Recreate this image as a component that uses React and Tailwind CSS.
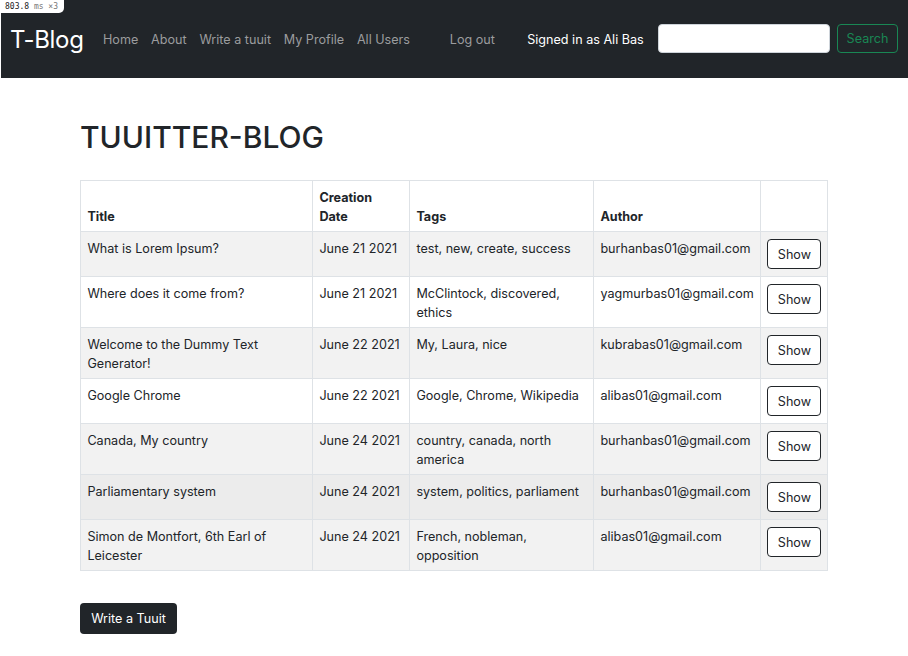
import React from 'react';

const NAV_LINKS = ['Home', 'About', 'Write a tuuit', 'My Profile', 'All Users'];

const TUUITS = [
  { title: 'What is Lorem Ipsum?', date: 'June 21 2021', tags: 'test, new, create, success', author: 'burhanbas01@gmail.com' },
  { title: 'Where does it come from?', date: 'June 21 2021', tags: 'McClintock, discovered, ethics', author: 'yagmurbas01@gmail.com' },
  { title: 'Welcome to the Dummy Text Generator!', date: 'June 22 2021', tags: 'My, Laura, nice', author: 'kubrabas01@gmail.com' },
  { title: 'Google Chrome', date: 'June 22 2021', tags: 'Google, Chrome, Wikipedia', author: 'alibas01@gmail.com' },
  { title: 'Canada, My country', date: 'June 24 2021', tags: 'country, canada, north america', author: 'burhanbas01@gmail.com' },
  { title: 'Parliamentary system', date: 'June 24 2021', tags: 'system, politics, parliament', author: 'burhanbas01@gmail.com' },
  { title: 'Simon de Montfort, 6th Earl of Leicester', date: 'June 24 2021', tags: 'French, nobleman, opposition', author: 'alibas01@gmail.com' },
];

const Navbar = () => (
  <nav className="h-[78px] bg-[#212529] border-l border-white flex items-center pl-[9px] pr-[10px] whitespace-nowrap">
    <span className="shrink-0 text-white text-[24px] leading-none mr-[13px] pt-[2px] tracking-[-0.3px]">T-Blog</span>
    <ul className="flex items-center shrink-0 pt-[2px]">
      {NAV_LINKS.map((link) => (
        <li key={link} className="px-[6.4px] text-[12.6px] text-[#9b9c9e]">
          {link}
        </li>
      ))}
      <li className="ml-[27px] px-[6.4px] text-[12.6px] text-[#9b9c9e]">Log out</li>
    </ul>
    <span className="shrink-0 ml-[26px] pt-[2px] text-[12.6px] text-white">Signed in as Ali Bas</span>
    <div className="ml-auto flex items-center gap-[7px] shrink-0 mb-[1px]">
      <input
        type="search"
        className="w-[172px] h-[29px] rounded-[4px] bg-white border border-[#ced4da] outline-none"
      />
      <button className="h-[29px] w-[61px] rounded-[4px] border border-[#198754] pt-[1px] text-[#198754] text-[12.6px]">
        Search
      </button>
    </div>
  </nav>
);

const TuuitTable = () => (
  <table className="w-[747px] table-fixed border-collapse text-[12.6px] text-[#212529] leading-[19px]">
    <colgroup>
      <col className="w-[232px]" />
      <col className="w-[97px]" />
      <col className="w-[184px]" />
      <col className="w-[167px]" />
      <col className="w-[67px]" />
    </colgroup>
    <thead>
      <tr>
        {['Title', 'Creation Date', 'Tags', 'Author', ''].map((h, i) => (
          <th key={i} className="border border-[#dee2e6] px-[6.4px] pt-[7px] pb-[5px] text-left align-bottom font-bold">
            {h}
          </th>
        ))}
      </tr>
    </thead>
    <tbody>
      {TUUITS.map((t, i) => {
        // striped rows, the sixth row shows the hover shade
        const bg = i === 5 ? 'bg-[#ececec]' : i % 2 === 0 ? 'bg-[#f2f2f2]' : 'bg-white';
        return (
          <tr key={i} className={bg}>
            <td className="border border-[#dee2e6] px-[6.4px] pt-[7px] pb-[5px] align-top">{t.title}</td>
            <td className="border border-[#dee2e6] px-[6.4px] pt-[7px] pb-[5px] align-top">{t.date}</td>
            <td className="border border-[#dee2e6] px-[6.4px] pt-[7px] pb-[5px] align-top">{t.tags}</td>
            <td className="border border-[#dee2e6] px-[6.4px] pt-[7px] pb-[5px] align-top">{t.author}</td>
            <td className="border border-[#dee2e6] px-[6.4px] pt-[7px] pb-[7px] align-top">
              <button className="h-[30px] w-[54px] rounded-[4px] border border-[#212529] bg-white pt-[1px] text-[12.6px] text-[#212529]">
                Show
              </button>
            </td>
          </tr>
        );
      })}
    </tbody>
  </table>
);

export default function App() {
  return (
    <div className="relative min-h-[656px] bg-white font-['Inter','Liberation_Sans',sans-serif]">
      <div className="absolute left-0 top-0 z-10 h-[13px] w-[64px] rounded-br-[5px] bg-white pl-[5px] font-['DejaVu_Sans_Mono',monospace] text-[8px] leading-[13px] text-[#222]">
        803.8 <span className="text-[#777]">ms ×3</span>
      </div>
      <Navbar />
      <main className="pl-[80px] pt-[40px]">
        <h1 className="text-[30px] leading-[38px] font-medium text-[#212529] mb-[24px]">TUUITTER-BLOG</h1>
        <TuuitTable />
        <button className="mt-[32px] h-[31px] w-[97px] rounded-[4px] bg-[#212529] pt-[1px] text-white text-[12.6px]">
          Write a Tuuit
        </button>
      </main>
    </div>
  );
}
